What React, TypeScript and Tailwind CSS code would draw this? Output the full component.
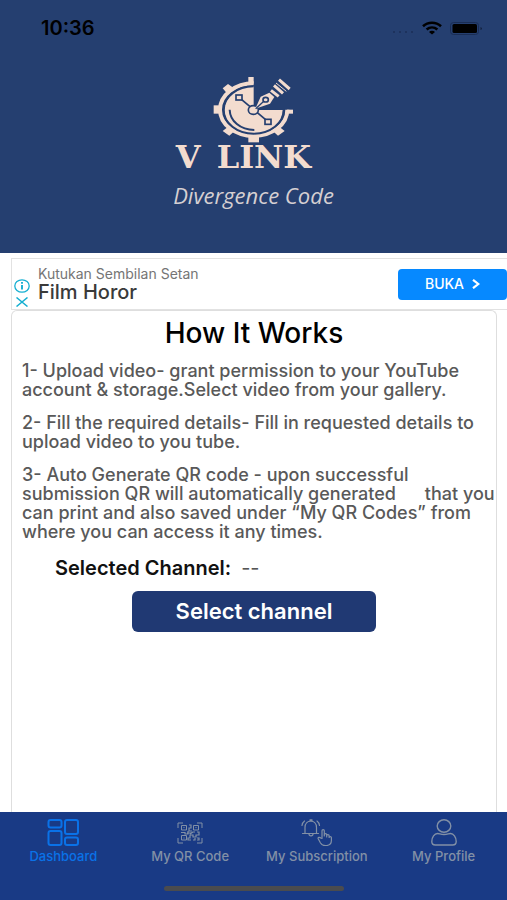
import type { ReactNode } from "react";

const sans = "font-['Inter','Liberation_Sans',sans-serif]";

function StatusBar() {
  return (
    <div className="flex h-14 items-center justify-between pr-6 pl-[41px] text-black">
      <span className="text-xl leading-5 font-semibold">10:36</span>
      <div className="flex items-center gap-2">
        <svg width="22" height="12" viewBox="0 0 22 12" fill="#1b2f57" aria-hidden="true">
          <circle cx="2" cy="10" r="1" />
          <circle cx="8" cy="10" r="1" />
          <circle cx="14" cy="10" r="1" />
          <circle cx="20" cy="10" r="1" />
        </svg>
        <svg width="20" height="14" viewBox="0 0 20 14" fill="none" stroke="#000" strokeWidth="2.6" aria-hidden="true">
          <path d="M1 5.2C6 .6 14 .6 19 5.2" />
          <path d="M4.6 8.6c3.2-2.8 7.600-2.800 10.800 0" />
          <path d="M10 13.600 7 11c1.600-1.600 4.400-1.600 6 0z" fill="#000" stroke="none" />
        </svg>
        <svg width="33" height="13" viewBox="0 0 33 13" aria-hidden="true">
          <rect x=".5" y=".5" width="28" height="12" rx="3" fill="none" stroke="#1a2d54" />
          <rect x="2.500" y="2" width="24.500" height="9" rx="1.500" />
          <path d="M30.500 5v3q1.500-.5 1.500-1.500T30.500 5" fill="#12203c" />
        </svg>
      </div>
    </div>
  );
}

function Logo() {
  return (
    <svg width="81" height="68" viewBox="160 49 243 204" aria-hidden="true">
      <g fill="#f3dccf">
        <rect x="266" y="52" width="16" height="20" />
        <rect x="266" y="230" width="32" height="18" />
        <rect x="162" y="137" width="18" height="25" />
        <rect x="382" y="150" width="18" height="12" />
        <path d="M189 86l16-13 18 13-20 16zM189 214l20-16 18 14-18 16zM375 214l-20-16-18 14 18 16z" />
        <path d="M282 80A88 71 0 1 0 370 151H282z" />
      </g>
      <path d="M282 71A101 79 0 1 0 383 150" fill="none" stroke="#f3dccf" strokeWidth="12" />
      <path d="M282 80A90 71 0 1 0 372 151" fill="none" stroke="#253f70" strokeWidth="6" />
      <path d="M210 150C211 184 242 211 284 211" fill="none" stroke="#253f70" strokeWidth="6" />
      <g stroke="#253f70" strokeWidth="5" fill="#f3dccf">
        <path d="M238 113 325 186" />
        <rect x="229" y="106" width="18" height="15" />
        <rect x="316" y="179" width="18" height="15" />
        <ellipse cx="281" cy="151" rx="15" ry="13" />
      </g>
      <path d="M287 147 303 111 329 99 344 112 331 132z" fill="#f3dccf" />
      <path d="M288 147 314 123" stroke="#253f70" strokeWidth="4" />
      <ellipse cx="318" cy="120" rx="8" ry="7" fill="#f3dccf" stroke="#253f70" strokeWidth="5" />
      <path d="M334 92 357 110M343 77 370 101M358 60 390 88" stroke="#f3dccf" strokeWidth="9" />
      <path d="M349 70 380 95" stroke="#f3dccf" strokeWidth="3" />
    </svg>
  );
}

function Header() {
  return (
    <header className="flex h-[253px] flex-col bg-[#253f70]">
      <StatusBar />
      <div className="flex flex-col items-center pt-5">
        <Logo />
        <h1 className="flex gap-4 pr-5 font-['DejaVu_Serif',serif] text-[32px] leading-[26px] font-bold text-[#f3dccf]">
          <span>V</span>
          <span>LINK</span>
        </h1>
        <p className="mt-3 font-['Open_Sans','Noto_Sans',sans-serif] text-[22px] leading-[26px] text-[#d5cfd2] italic">
          Divergence Code
        </p>
      </div>
    </header>
  );
}

function AdBanner() {
  return (
    <aside className="ml-[11px] flex h-[52px] items-center border-y border-l border-[#e2e2e2] bg-white">
      <div className="flex w-[26px] flex-col items-center gap-1 pt-[18px] pr-[6px]">
        <svg width="16" height="14" viewBox="0 0 16 14" fill="none" stroke="#16afd1" aria-label="Ad information">
          <ellipse cx="8" cy="7" rx="7.200" ry="6.200" strokeWidth="1.300" />
          <path d="M8 6v4.500M8 3v1.700" strokeWidth="1.900" />
        </svg>
        <svg width="12" height="10" viewBox="0 0 12 10" stroke="#16afd1" strokeWidth="1.500" aria-label="Close ad">
          <path d="M.5.5l11 9M11.500.5l-11 9" />
        </svg>
      </div>
      <div className="flex-1">
        <p className="text-sm leading-4 text-[#757575]">Kutukan Sembilan Setan</p>
        <p className="text-xl leading-5 font-medium text-[#3a3a3a]">Film Horor</p>
      </div>
      <button className="flex h-[31px] w-[109px] items-center justify-center gap-2 rounded bg-[#0689ff] text-sm font-medium text-white">
        BUKA
        <svg width="8" height="10" viewBox="0 0 8 10" fill="none" stroke="currentColor" strokeWidth="2.200" aria-hidden="true">
          <path d="M1 .8 6.300 5 1 9.200" />
        </svg>
      </button>
    </aside>
  );
}

function HowItWorks() {
  return (
    <section className="mr-[10px] ml-[11px] flex-1 rounded-t-md border border-b-0 border-[#dedede] bg-white">
      <h2 className="pt-1 text-center text-[28px] leading-9 font-medium text-black">How It Works</h2>
      <div className="flex flex-col gap-[14px] pt-[10px] pl-[10px] text-lg leading-[19px] font-medium whitespace-nowrap text-[#595959]">
        <p>
          1- Upload video- grant permission to your YouTube
          <br />
          account &amp; storage.Select video from your gallery.
        </p>
        <p>
          2- Fill the required details- Fill in requested details to
          <br />
          upload video to you tube.
        </p>
        <p>
          3- Auto Generate QR code - upon successful
          <br />
          submission QR will automatically generated <span className="pl-6">that you</span>
          <br />
          can print and also saved under “My QR Codes” from
          <br />
          where you can access it any times.
        </p>
      </div>
      <p className="mt-[15px] flex gap-[10px] pl-[43px] text-xl leading-6 text-[#555]">
        <span className="font-semibold text-[#111]">Selected Channel:</span>
        <span>--</span>
      </p>
      <div className="mt-[11px] flex justify-center">
        <button className="h-[41px] w-[244px] rounded-md bg-[#203973] text-[22px] font-semibold text-white">
          Select channel
        </button>
      </div>
    </section>
  );
}

function DashboardIcon() {
  return (
    <svg width="32" height="27" viewBox="0 0 32 27" fill="none" stroke="currentColor" strokeWidth="2" aria-hidden="true">
      <rect x="1.500" y="1" width="13" height="7.500" rx="2" />
      <rect x="18" y="1" width="13" height="14" rx="2" />
      <rect x="1.500" y="12" width="13" height="14" rx="2" />
      <rect x="18" y="18.500" width="13" height="7.500" rx="2" />
    </svg>
  );
}

function QrIcon() {
  return (
    <svg width="26" height="27" viewBox="0 0 26 27" fill="none" stroke="currentColor" aria-hidden="true">
      <path d="M1 9V4h5M20 4h5v5M25 19v5h-5M6 24H1v-5" />
      <path d="M4.500 6.500h5v4.500h-5zM16.500 6.500h5v4.500h-5zM4.500 16.500h5V21h-5z" />
      <path d="M12 6h2v3h-2v3h3M4 13.500h4v1.500h3v-3M10 14h4l2-1h2M20 13h2v3h-3v2h-3v-2h-3v3h-2v2h3M16 21h2v-2M20 19h2v2h-2M13 15l3-2M6.500 8.500h1M18.500 8.500h1M6.500 19h1" strokeWidth="1.200" />
    </svg>
  );
}

function SubscriptionIcon() {
  return (
    <svg width="32" height="27" viewBox="0 0 32 27" fill="none" stroke="currentColor" strokeWidth="1.200" strokeLinejoin="round" strokeLinecap="round" aria-hidden="true">
      <path d="M1.500 14.500h16M4 14V8.500C4 0 15.500 0 15.500 8.500V14M9 2V.8h2V2M8 15c0 2.500 4 2.500 4 0M1 6.500q.4-3 2.500-4.500M18.500 6.500q-.4-3-2.500-4.500" />
      <path d="M21 19.500v-7.700c0-1.500 2.300-1.500 2.300 0V17v-1.500c0-1.300 2.400-1.300 2.400 0V18v-1.500c0-1.300 2.400-1.300 2.400 0V18.500c0-1.300 2.300-1.300 2.300 0V21.500c0 6-8.400 6.500-10.900 2.500l-2.300-4.200c-.6-1.500 1.500-2 2.500-.8z" />
    </svg>
  );
}

function ProfileIcon() {
  return (
    <svg width="26" height="27" viewBox="0 0 26 27" fill="none" stroke="currentColor" strokeWidth="1.400" aria-hidden="true">
      <ellipse cx="13" cy="7" rx="6.800" ry="6.200" />
      <path d="M6.500 14.500C3.500 14.500.8 18 .8 22.500.8 25.300 2 26 4.300 26h17.400c2.300 0 3.500-.7 3.500-3.500 0-4.500-2.700-8-5.700-8-2 0-3 1-6.500 1s-4.500-1-6.500-1z" />
    </svg>
  );
}

const tabs: { label: string; icon: ReactNode; active?: boolean }[] = [
  { label: "Dashboard", icon: <DashboardIcon />, active: true },
  { label: "My QR Code", icon: <QrIcon /> },
  { label: "My Subscription", icon: <SubscriptionIcon /> },
  { label: "My Profile", icon: <ProfileIcon /> },
];

function TabBar() {
  return (
    <nav className="flex h-[88px] flex-col justify-between bg-[#193a85] pt-[7px] pb-[9px]">
      <div className="grid grid-cols-4">
        {tabs.map((tab) => (
          <a
            key={tab.label}
            href="#"
            className={
              "flex flex-col items-center gap-[2px] text-[13px] leading-4 font-medium whitespace-nowrap " +
              (tab.active ? "text-[#0a72e8]" : "text-[#8290a6]")
            }
          >
            {tab.icon}
            {tab.label}
          </a>
        ))}
      </div>
      <div className="mx-auto h-[5px] w-[180px] rounded-full bg-[#4a4b4e]" />
    </nav>
  );
}

export default function App() {
  return (
    <div className={"flex min-h-screen flex-col bg-white " + sans}>
      <Header />
      <main className="flex flex-1 flex-col pt-[5px]">
        <AdBanner />
        <HowItWorks />
      </main>
      <TabBar />
    </div>
  );
}
